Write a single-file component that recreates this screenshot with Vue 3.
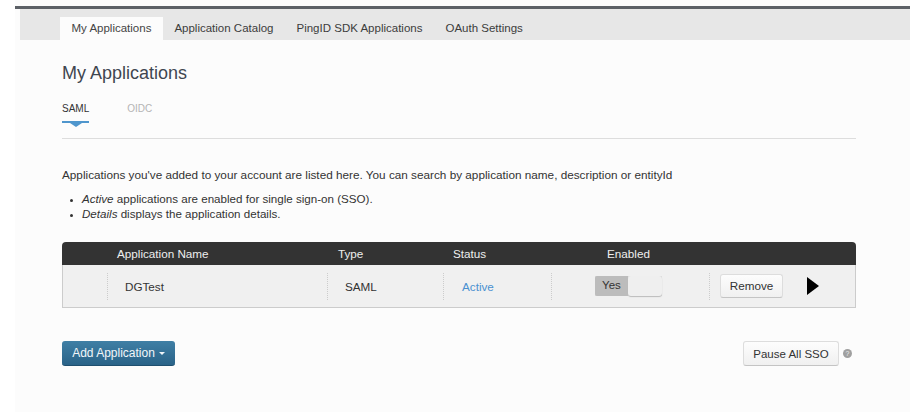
<template>
  <div class="page">
    <div class="topbar"></div>
    <ul class="tabs">
      <li v-for="(t, i) in tabs" :key="t" class="tab" :class="{ active: i === 0 }">{{ t }}</li>
    </ul>
    <div class="content">
      <h1 class="title">My Applications</h1>
      <div class="subtabs">
        <div class="subtab current">SAML<span class="marker"></span></div>
        <div class="subtab">OIDC</div>
      </div>
      <p class="intro">Applications you've added to your account are listed here. You can search by application name, description or entityId</p>
      <ul class="notes">
        <li><em>Active</em> applications are enabled for single sign-on (SSO).</li>
        <li><em>Details</em> displays the application details.</li>
      </ul>
      <div class="table">
        <div class="thead">
          <span class="th name">Application Name</span>
          <span class="th type">Type</span>
          <span class="th status">Status</span>
          <span class="th enabled">Enabled</span>
        </div>
        <div class="trow">
          <div class="cell name">DGTest</div>
          <div class="cell type">SAML</div>
          <div class="cell status"><a class="link">Active</a></div>
          <div class="cell enabled">
            <div class="toggle">
              <span class="toggle-yes">Yes</span>
              <span class="toggle-knob"></span>
            </div>
          </div>
          <div class="cell actions">
            <button class="btn remove">Remove</button>
            <svg class="expand" width="12" height="18" viewBox="0 0 12 18"><path d="M0 0L12 9L0 18Z" fill="#000" /></svg>
          </div>
        </div>
      </div>
      <div class="footer">
        <button class="add">Add Application<span class="caret"></span></button>
        <div class="pause">
          <button class="btn pause-btn">Pause All SSO</button>
          <span class="help">?</span>
        </div>
      </div>
    </div>
  </div>
</template>

<script setup>
const tabs = ['My Applications', 'Application Catalog', 'PingID SDK Applications', 'OAuth Settings']
</script>

<style>
html, body {
  margin: 0;
  background: #fff;
}
</style>

<style scoped>
.page {
  width: 895px;
  height: 412px;
  margin-left: 15px;
  background: #fcfcfc;
  font-family: "Liberation Sans", Arial, sans-serif;
  color: #333;
  overflow: hidden;
}

.topbar {
  height: 3px;
  margin-top: 6px;
  background: #5c6066;
}

.tabs {
  display: flex;
  list-style: none;
  margin: 0 0 0 5px;
  padding: 8px 0 0 40px;
  height: 23px;
  background: #e7e7e7;
}

.tab {
  padding: 0 11.5px;
  font-size: 11.5px;
  line-height: 23px;
  color: #3c3c3c;
  white-space: nowrap;
}

.tab.active {
  background: #fcfcfc;
  color: #444;
}

.content {
  padding: 0 54px 0 47px;
}

.title {
  margin: 23px 0 0;
  font-size: 18px;
  line-height: 20px;
  font-weight: 400;
  color: #3f4650;
}

.subtabs {
  display: flex;
  gap: 38px;
  margin-top: 20px;
  height: 35px;
  border-bottom: 1px solid #ddd;
  box-sizing: content-box;
}

.subtab {
  position: relative;
  font-size: 10px;
  line-height: 12px;
  color: #b4b4b4;
}

.subtab.current {
  color: #333;
}

.marker {
  position: absolute;
  left: 0;
  right: 0;
  top: 18px;
  height: 2px;
  background: #4f96cd;
}

.marker::after {
  content: "";
  position: absolute;
  left: 50%;
  top: 2px;
  margin-left: -6px;
  border-left: 6px solid transparent;
  border-right: 6px solid transparent;
  border-top: 4px solid #4f96cd;
}

.intro {
  margin: 29px 0 0;
  font-size: 11.75px;
  line-height: 14px;
  white-space: nowrap;
}

.notes {
  margin: 9px 0 0;
  padding: 0 0 0 20px;
  font-size: 11.6px;
  line-height: 15px;
}

.notes li::marker {
  font-size: 9px;
}

.table {
  margin-top: 21px;
}

.thead {
  display: grid;
  grid-template-columns: 45px 220px 116px 108px 1fr;
  height: 23px;
  background: #333;
  border-radius: 4px 4px 0 0;
}

.th {
  font-size: 11.7px;
  line-height: 23px;
  color: #eee;
}

.th.name { padding-left: 10px; grid-column: 2; }
.th.type { padding-left: 11px; }
.th.status { padding-left: 10px; }
.th.enabled { padding-left: 56px; }

.trow {
  display: grid;
  grid-template-columns: 44px 220px 116px 108px 158px 1fr;
  align-items: center;
  height: 43px;
  box-sizing: border-box;
  background: #f0f0f0;
  border: solid #ccc;
  border-width: 0 1px 1px;
  padding: 8px 0 7px;
}

.cell {
  display: flex;
  align-items: center;
  height: 100%;
  font-size: 11.7px;
  border-left: 1px dotted #ccc;
}

.cell.name { grid-column: 2; padding-left: 17px; }
.cell.type { padding-left: 17px; }
.cell.status { padding-left: 18px; }
.cell.enabled { padding-left: 43px; }
.cell.actions { padding-left: 10px; gap: 24px; }

.link {
  color: #4a90d0;
}

.toggle {
  display: flex;
  width: 67px;
  height: 20px;
  margin-top: -2px;
  border-radius: 2px;
  background: #e4e4e4;
  box-shadow: inset 0 0 1px #aaa;
}

.toggle-yes {
  width: 33px;
  font-size: 11.5px;
  line-height: 19px;
  text-align: center;
  color: #333;
  background: #bcbcbc;
  border-radius: 2px 0 0 2px;
}

.toggle-knob {
  flex: 1;
  background: #efefef;
  border-radius: 3px;
  box-shadow: 0 1px 1px #bbb;
}

.btn {
  font-family: inherit;
  font-size: 11.7px;
  color: #333;
  background: linear-gradient(#fdfdfd, #f0f0f0);
  border: 1px solid #ddd;
  border-bottom-color: #c4c4c4;
  border-radius: 3px;
  padding: 0;
}

.remove {
  width: 63px;
  height: 24px;
  margin-top: -2px;
}

.expand {
  margin-top: -1px;
}

.footer {
  display: flex;
  justify-content: space-between;
  align-items: center;
  margin-top: 33px;
}

.add {
  display: flex;
  align-items: center;
  justify-content: center;
  width: 113px;
  height: 25px;
  padding: 0;
  font-family: inherit;
  font-size: 12px;
  color: #f2f6f9;
  background: linear-gradient(#3f7fa5, #2a6388);
  border: 0;
  border-bottom: 1px solid #1f4f6f;
  border-radius: 3px;
}

.caret {
  margin-left: 4px;
  border-left: 3px solid transparent;
  border-right: 3px solid transparent;
  border-top: 3px solid #f2f6f9;
}

.pause {
  display: flex;
  align-items: center;
  gap: 4px;
  margin-right: 4px;
}

.pause-btn {
  width: 96px;
  height: 25px;
  font-size: 11.5px;
}

.help {
  width: 9px;
  height: 9px;
  border-radius: 50%;
  background: #a0a0a0;
  color: #eee;
  font-size: 7px;
  line-height: 9px;
  text-align: center;
}
</style>
